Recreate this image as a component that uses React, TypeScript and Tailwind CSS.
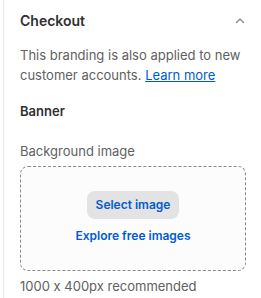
import React from "react";

export default function App() {
  return (
    <div className="w-[261px] h-[298px] bg-white overflow-hidden flex [font-feature-settings:'calt'_0]" style={{ fontFamily: "Inter, 'Noto Sans', sans-serif" }}>
      <div className="ml-[3px] w-px bg-[#ebebeb] shrink-0" />
      <div className="flex-1 pl-[16px] pr-[15px] pt-[11px] flex flex-col">
        <div className="flex items-center justify-between h-[20px]">
          <span className="text-[14px] leading-[20px] font-semibold text-[#303030]">Checkout</span>
          <svg width="12" height="12" viewBox="0 0 12 12" className="mr-[0px]">
            <path d="M2.5 7.5 L6 4 L9.5 7.5" fill="none" stroke="#8a8a8a" strokeWidth="1.4" strokeLinecap="round" strokeLinejoin="round" />
          </svg>
        </div>
        <p className="mt-[14px] text-[13px] leading-[20px] text-[#616161]">
          This branding is also applied to new customer accounts.{" "}
          <a className="text-[#005bd3] underline">Learn more</a>
        </p>
        <div className="mt-[16px] text-[13px] leading-[20px] font-semibold text-[#303030]">Banner</div>
        <div className="mt-[20px] text-[13px] leading-[20px] text-[#616161]">Background image</div>
        <div className="mt-[5px] h-[105px] rounded-[8px] border border-dashed border-[#8a8a8a] bg-[#fcfcfc] flex flex-col items-center pt-[24px]">
          <button className="h-[28px] px-[9px] rounded-[8px] bg-[#e3e3e3] text-[12px] font-semibold text-[#005bd3]">Select image</button>
          <span className="mt-[9px] text-[12px] leading-[16px] font-semibold text-[#005bd3]">Explore free images</span>
        </div>
        <div className="mt-[5px] text-[13px] leading-[20px] text-[#616161]">1000 x 400px recommended</div>
      </div>
    </div>
  );
}
